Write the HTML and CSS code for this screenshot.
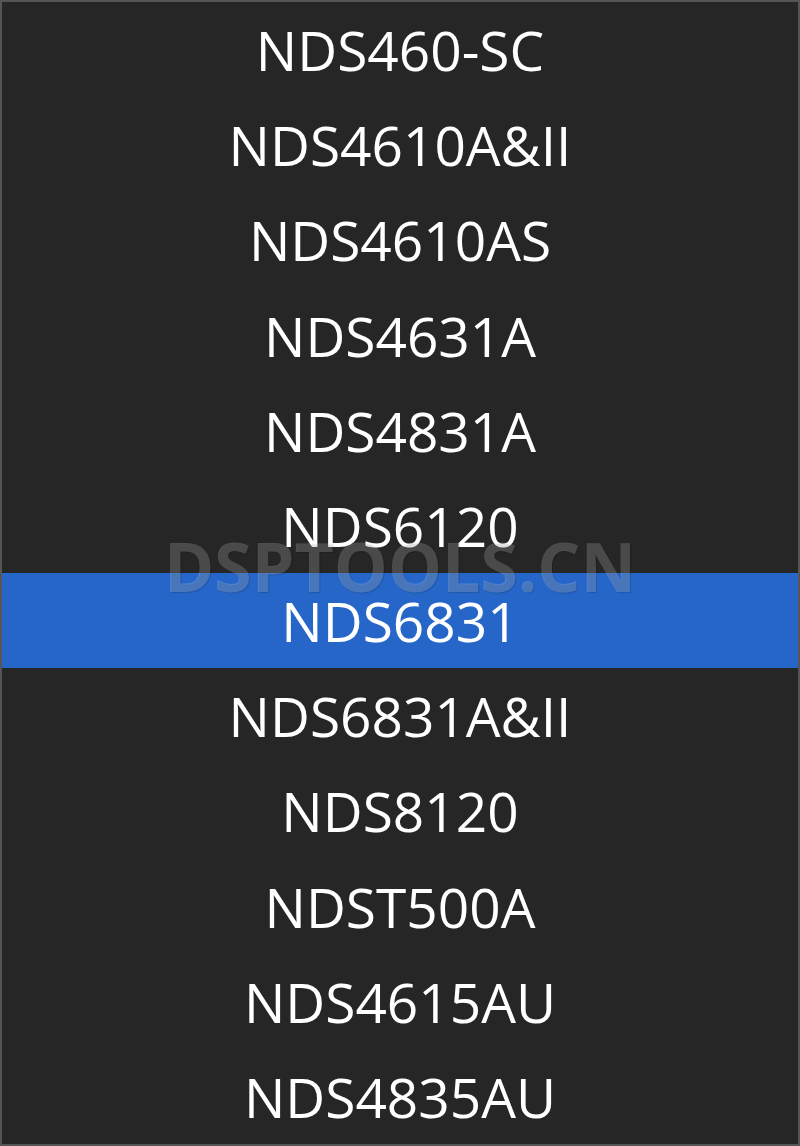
FILE: index.html
```html
<!DOCTYPE html>
<html lang="en">
<head>
  <meta charset="UTF-8">
  <title>Model List</title>
  <link rel="stylesheet" href="styles.css">
</head>
<body>
  <div class="picker">
    <ul class="list">
      <li class="item">NDS460-SC</li>
      <li class="item">NDS4610A&amp;II</li>
      <li class="item">NDS4610AS</li>
      <li class="item">NDS4631A</li>
      <li class="item">NDS4831A</li>
      <li class="item">NDS6120</li>
      <li class="item selected">NDS6831</li>
      <li class="item">NDS6831A&amp;II</li>
      <li class="item">NDS8120</li>
      <li class="item">NDST500A</li>
      <li class="item">NDS4615AU</li>
      <li class="item">NDS4835AU</li>
    </ul>
    <!-- watermark over the list -->
    <div class="watermark">DSPTOOLS.CN</div>
  </div>
</body>
</html>
```

FILE: styles.css
```css
* {
  margin: 0;
  padding: 0;
  box-sizing: border-box;
}

body {
  width: 800px;
  height: 1146px;
  background-color: #262626;
  font-family: 'Open Sans', 'Noto Sans', sans-serif;
  overflow: hidden;
}

.picker {
  position: relative;
  height: 1146px;
  border: 2px solid #555555;
  background-color: #262626;
}

.list {
  list-style: none;
  display: flex;
  flex-direction: column;
  height: 100%;
}

.item {
  flex: 1;
  display: flex;
  align-items: center;
  justify-content: center;
  color: #ffffff;
  font-size: 55px;
  line-height: 1;
}

.item.selected {
  background-color: #2566c8;
}

.watermark {
  position: absolute;
  left: 0;
  right: 0;
  top: 530px;
  text-align: center;
  font-family: 'Open Sans', sans-serif;
  font-weight: 700;
  font-size: 68px;
  line-height: 68px;
  color: rgba(255, 255, 255, 0.19);
  text-shadow: 1px 1px 1px rgba(0, 0, 0, 0.15);
  pointer-events: none;
}
```
